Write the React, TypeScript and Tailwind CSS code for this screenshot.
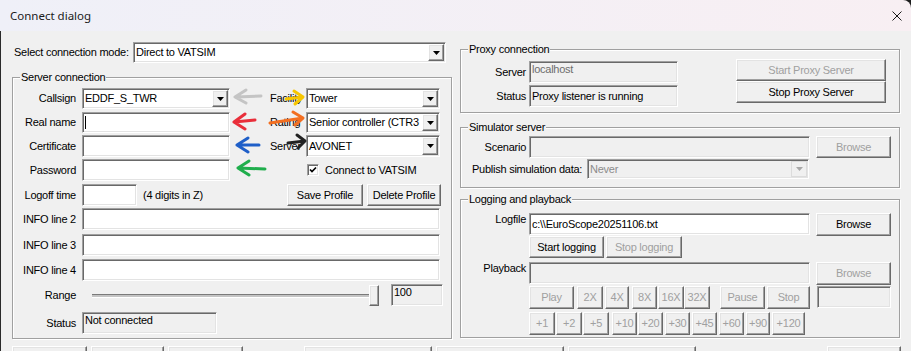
import type { ReactNode } from 'react'

// classic win32 3d edges
const sunken =
  'border border-t-[#a0a0a0] border-l-[#a0a0a0] border-b-white border-r-white shadow-[inset_1px_1px_0_#696969,inset_-1px_-1px_0_#e3e3e3]'
const raised =
  'border border-t-white border-l-white border-b-[#696969] border-r-[#696969] shadow-[inset_-1px_-1px_0_#a0a0a0,inset_1px_1px_0_#e3e3e3]'

function Box({ className = '', children, ro }: { className?: string; children?: ReactNode; ro?: boolean }) {
  return (
    <div
      className={`${sunken} ${ro ? 'bg-[#f0f0f0]' : 'bg-white'} flex items-center pl-[2px] whitespace-nowrap overflow-hidden shrink-0 ${className}`}
    >
      {children}
    </div>
  )
}

function Combo({ className = '', value, disabled }: { className?: string; value: string; disabled?: boolean }) {
  return (
    <div
      className={`${sunken} ${disabled ? 'bg-[#f0f0f0] text-[#8c8c8c]' : 'bg-white'} flex items-stretch shrink-0 p-[1px] ${className}`}
    >
      <span className="flex-1 flex items-center pl-[1px] overflow-hidden whitespace-nowrap">{value}</span>
      <span
        className={`w-[16px] shrink-0 flex items-center justify-center bg-[#f0f0f0] ${disabled ? 'border border-[#dcdcdc]' : raised}`}
      >
        <svg width="7" height="4" viewBox="0 0 7 4">
          <path d="M0 0h7L3.5 4z" fill={disabled ? '#a8a8a8' : '#000'} />
        </svg>
      </span>
    </div>
  )
}

function Btn({ className = '', children, disabled }: { className?: string; children?: ReactNode; disabled?: boolean }) {
  return (
    <button
      type="button"
      className={`${raised} bg-[#f0f0f0] flex items-center justify-center whitespace-nowrap shrink-0 ${disabled ? 'text-[#a0a0a0]' : 'text-black'} ${className}`}
    >
      {children}
    </button>
  )
}

function Label({ children }: { children: ReactNode }) {
  return <span className="w-[69px] shrink-0 text-right pr-[6px] whitespace-nowrap">{children}</span>
}

function RLabel({ children }: { children: ReactNode }) {
  return <span className="w-[68px] shrink-0 text-right pr-[3px] whitespace-nowrap">{children}</span>
}

function Group({ title, className = '', children }: { title: string; className?: string; children?: ReactNode }) {
  return (
    <div className={`relative border border-[#a0a0a0] shadow-[inset_1px_1px_0_#fff,1px_1px_0_#fff] ${className}`}>
      <span className="absolute left-[7px] -top-[7px] bg-[#f0f0f0] px-[1px] leading-[13px] whitespace-nowrap">
        {title}
      </span>
      {children}
    </div>
  )
}

function Arrows() {
  return (
    <svg
      className="absolute inset-0 pointer-events-none"
      width="911"
      height="351"
      viewBox="0 0 911 351"
      fill="none"
      strokeWidth="3"
      strokeLinecap="round"
      strokeLinejoin="round"
    >
      <path d="M261 96 L236 97 M246 90 L235 97 L246 103" stroke="#c4c4c4" />
      <path d="M255 120 Q245 121 234 122 M245 114 L234 122 L245 129" stroke="#e92e3a" />
      <path d="M259 145 L237 145 M248 138 L237 145 L248 152" stroke="#1f5fc8" />
      <path d="M265 169 L238 168 M249 161 L238 168 L249 175" stroke="#1fae4c" />
      <path d="M286 99 L303 97 M294 91 L303 97 L295 104" stroke="#f7c600" />
      <path d="M270 123 L303 118 M293 112 L303 118 L295 125" stroke="#f36f21" />
      <path d="M288 143 L305 141 M297 135 L305 141 L298 148" stroke="#222222" />
    </svg>
  )
}

function ServerConnection() {
  return (
    <Group title="Server connection" className="mt-[14px] h-[262px] w-[440px]">
      <div className="flex items-center h-[21px] mt-[10px]">
        <Label>Callsign</Label>
        <Combo className="w-[148px] h-[21px]" value="EDDF_S_TWR" />
        <span className="ml-[40px] w-[36px] shrink-0">Facility</span>
        <Combo className="w-[134px] h-[21px]" value="Tower" />
      </div>
      <div className="flex items-center h-[21px] mt-[3px]">
        <Label>Real name</Label>
        <Box className="w-[148px] h-[21px]">
          <span className="w-px h-[13px] bg-black" />
        </Box>
        <span className="ml-[40px] w-[36px] shrink-0">Rating</span>
        <Combo className="w-[134px] h-[21px]" value="Senior controller (CTR3" />
      </div>
      <div className="flex items-center h-[22px] mt-[2px]">
        <Label>Certificate</Label>
        <Box className="w-[148px] h-[22px]" />
        <span className="ml-[40px] w-[36px] shrink-0">Server</span>
        <Combo className="w-[134px] h-[22px]" value="AVONET" />
      </div>
      <div className="flex items-center h-[22px] mt-[2px]">
        <Label>Password</Label>
        <Box className="w-[148px] h-[22px]" />
        <span className={`ml-[77px] w-[12px] h-[12px] bg-white ${sunken} flex items-center justify-center shrink-0`}>
          <svg width="8" height="8" viewBox="0 0 8 8">
            <path d="M1 3.5l2 2L7 1.5" stroke="#000" strokeWidth="1.7" fill="none" />
          </svg>
        </span>
        <span className="ml-[6px] whitespace-nowrap">Connect to VATSIM</span>
      </div>
      <div className="flex items-center h-[22px] mt-[3px]">
        <Label>Logoff time</Label>
        <Box className="w-[55px] h-[22px]" />
        <span className="ml-[6px] whitespace-nowrap">(4 digits in Z)</span>
        <Btn className="ml-auto w-[76px] h-[22px]">Save Profile</Btn>
        <Btn className="ml-[4px] mr-[10px] w-[74px] h-[22px]">Delete Profile</Btn>
      </div>
      <div className="flex items-center h-[22px] mt-[2px]">
        <Label>INFO line 2</Label>
        <Box className="w-[358px] h-[22px]" />
      </div>
      <div className="flex items-center h-[22px] mt-[4px]">
        <Label>INFO line 3</Label>
        <Box className="w-[358px] h-[22px]" />
      </div>
      <div className="flex items-center h-[22px] mt-[3px]">
        <Label>INFO line 4</Label>
        <Box className="w-[358px] h-[22px]" />
      </div>
      <div className="flex items-center h-[23px] mt-[3px]">
        <Label>Range</Label>
        <div className="ml-[10px] w-[277px] h-[3px] border-t border-[#7a7a7a] bg-[#c4c4c4] shadow-[0_1px_0_#fff]" />
        <Btn className="w-[10px] h-[21px]" />
        <Box ro className="ml-[12px] w-[52px] h-[22px] self-start items-start pt-[1px]">
          100
        </Box>
      </div>
      <div className="flex items-center h-[22px] mt-[5px]">
        <Label>Status</Label>
        <Box ro className="w-[135px] h-[22px] items-start pt-[1px]">
          Not connected
        </Box>
      </div>
    </Group>
  )
}

function RightColumn() {
  return (
    <div className="ml-[8px] w-[440px] flex flex-col">
      <Group title="Proxy connection" className="mt-[18px] h-[64px]">
        <div className="flex">
          <div className="mt-[11px] flex flex-col">
            <div className="flex items-center h-[22px]">
              <RLabel>Server</RLabel>
              <Box ro className="w-[149px] h-[22px] text-[#6d6d6d] items-start pt-[1px]">
                localhost
              </Box>
            </div>
            <div className="flex items-center h-[22px] mt-[2px]">
              <RLabel>Status</RLabel>
              <Box ro className="w-[149px] h-[22px]">
                Proxy listener is running
              </Box>
            </div>
          </div>
          <div className="ml-[58px] mt-[9px] flex flex-col">
            <Btn disabled className="w-[150px] h-[22px]">
              Start Proxy Server
            </Btn>
            <Btn className="w-[150px] h-[22px]">Stop Proxy Server</Btn>
          </div>
        </div>
      </Group>

      <Group title="Simulator server" className="mt-[14px] h-[61px]">
        <div className="flex items-center h-[22px] mt-[8px]">
          <RLabel>Scenario</RLabel>
          <Box ro className="w-[281px] h-[22px]" />
          <Btn disabled className="ml-[6px] w-[75px] h-[22px]">
            Browse
          </Btn>
        </div>
        <div className="flex items-center h-[20px] mt-[1px]">
          <span className="ml-[11px] w-[115px] shrink-0 whitespace-nowrap">Publish simulation data:</span>
          <Combo disabled className="w-[222px] h-[20px]" value="Never" />
        </div>
      </Group>

      <Group title="Logging and playback" className="mt-[11px] h-[139px]">
        <div className="flex items-start h-[23px] mt-[13px]">
          <RLabel>Logfile</RLabel>
          <Box className="w-[281px] h-[22px]">{'c:\\\\EuroScope20251106.txt'}</Box>
          <Btn className="ml-[6px] w-[75px] h-[23px]">Browse</Btn>
        </div>
        <div className="flex h-[22px] pl-[68px]">
          <Btn className="w-[75px] h-[22px]">Start logging</Btn>
          <Btn disabled className="ml-[2px] w-[76px] h-[22px]">
            Stop logging
          </Btn>
        </div>
        <div className="flex items-start h-[23px] mt-[4px]">
          <RLabel>Playback</RLabel>
          <Box ro className="w-[281px] h-[22px]" />
          <Btn disabled className="ml-[6px] w-[75px] h-[23px]">
            Browse
          </Btn>
        </div>
        <div className="flex h-[23px] mt-[1px] pl-[68px]">
          <Btn disabled className="w-[45px] h-[23px]">Play</Btn>
          <Btn disabled className="ml-[3px] w-[26px] h-[23px]">2X</Btn>
          <Btn disabled className="ml-[2px] w-[24px] h-[23px]">4X</Btn>
          <Btn disabled className="ml-[3px] w-[25px] h-[23px]">8X</Btn>
          <Btn disabled className="ml-[1px] w-[26px] h-[23px]">16X</Btn>
          <Btn disabled className="w-[26px] h-[23px]">32X</Btn>
          <Btn disabled className="ml-[10px] w-[45px] h-[23px]">Pause</Btn>
          <Btn disabled className="ml-[2px] w-[43px] h-[23px]">Stop</Btn>
          <Box ro className="ml-[7px] w-[74px] h-[22px]" />
        </div>
        <div className="flex h-[23px] mt-[3px] pl-[68px]">
          <Btn disabled className="w-[26px] h-[23px]">+1</Btn>
          <Btn disabled className="ml-[1px] w-[26px] h-[23px]">+2</Btn>
          <Btn disabled className="ml-[1px] w-[26px] h-[23px]">+5</Btn>
          <Btn disabled className="ml-[3px] w-[25px] h-[23px]">+10</Btn>
          <Btn disabled className="ml-[1px] w-[25px] h-[23px]">+20</Btn>
          <Btn disabled className="ml-[2px] w-[25px] h-[23px]">+30</Btn>
          <Btn disabled className="ml-[2px] w-[25px] h-[23px]">+45</Btn>
          <Btn disabled className="ml-[2px] w-[25px] h-[23px]">+60</Btn>
          <Btn disabled className="ml-[2px] w-[24px] h-[23px]">+90</Btn>
          <Btn disabled className="ml-[2px] w-[33px] h-[23px]">+120</Btn>
        </div>
      </Group>
    </div>
  )
}

export default function App() {
  return (
    <div className="relative w-[911px] h-[351px] overflow-hidden bg-[#1c1c1c] font-['Liberation_Sans',Arial,sans-serif] text-[11px] leading-[13px] tracking-[-0.25px] text-black">
      <div className="h-full flex flex-col rounded-tr-[8px] overflow-hidden">
        {/* title bar */}
        <div className="h-[31px] shrink-0 flex items-center bg-gradient-to-r from-[#eff0f8] to-[#f8eff3]">
          <span className="pl-[10px] font-['Noto_Sans',sans-serif] text-[11.5px] tracking-normal text-[#1a1a1a]">
            Connect dialog
          </span>
          <svg className="ml-auto mr-[9px]" width="10" height="10" viewBox="0 0 10 10">
            <path d="M0.5 0.5L9.5 9.5M9.5 0.5L0.5 9.5" stroke="#1a1a1a" strokeWidth="1" />
          </svg>
        </div>

        <div className="flex-1 bg-[#f0f0f0] border-l border-[#2a2a2a]">
          <div className="flex items-start">
            <div className="ml-[11px] w-[440px] flex flex-col">
              <div className="flex items-center h-[21px] mt-[11px] ml-[2px]">
                <span className="w-[119px] shrink-0 whitespace-nowrap">Select connection mode:</span>
                <Combo className="w-[313px] h-[21px]" value="Direct to VATSIM" />
              </div>
              <ServerConnection />
            </div>
            <RightColumn />
          </div>

          {/* bottom button row, cut off by the window edge */}
          <div className="flex mt-[7px]">
            <Btn className="ml-[11px] w-[75px] h-[22px]" />
            <Btn className="ml-[4px] w-[73px] h-[22px]" />
            <Btn className="ml-[4px] w-[75px] h-[22px]" />
            <Btn className="ml-[61px] w-[128px] h-[22px]" />
            <Btn className="ml-[4px] w-[128px] h-[22px]" />
            <Btn className="ml-[4px] w-[128px] h-[22px]" />
            <Btn className="ml-[131px] w-[74px] h-[22px]" />
          </div>
        </div>
      </div>
      <Arrows />
    </div>
  )
}
